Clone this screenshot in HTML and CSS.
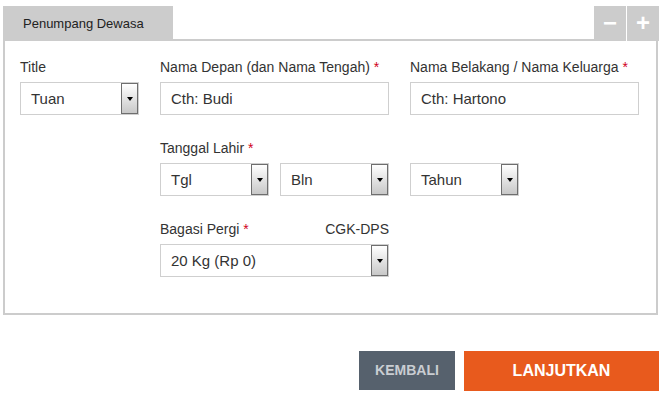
FILE: index.html
```html
<!DOCTYPE html>
<html>
<head>
<meta charset="utf-8">
<link rel="stylesheet" href="styles.css">
</head>
<body>
<div class="wrap">
  <div class="head">
    <div class="tab">Penumpang Dewasa</div>
    <div class="spacer"></div>
    <div class="tools">
      <div class="tool">&minus;</div>
      <div class="tool">+</div>
    </div>
  </div>
  <div class="panel">
    <div class="grid">
      <div class="field">
        <div class="label">Title</div>
        <div class="select w-title"><span class="val">Tuan</span><span class="btn"><span class="tri"></span></span></div>
      </div>
      <div class="field">
        <div class="label">Nama Depan (dan Nama Tengah) <span class="req">*</span></div>
        <div class="input">Cth: Budi</div>
      </div>
      <div class="field">
        <div class="label">Nama Belakang / Nama Keluarga <span class="req">*</span></div>
        <div class="input">Cth: Hartono</div>
      </div>

      <div class="field col2 span2">
        <div class="label">Tanggal Lahir <span class="req">*</span></div>
        <div class="dates">
          <div class="select w-date"><span class="val">Tgl</span><span class="btn"><span class="tri"></span></span></div>
          <div class="select w-date"><span class="val">Bln</span><span class="btn"><span class="tri"></span></span></div>
          <div class="select w-date"><span class="val">Tahun</span><span class="btn"><span class="tri"></span></span></div>
        </div>
      </div>

      <div class="field col2">
        <div class="label split"><span>Bagasi Pergi <span class="req">*</span></span><span>CGK-DPS</span></div>
        <div class="select"><span class="val">20 Kg (Rp 0)</span><span class="btn"><span class="tri"></span></span></div>
      </div>
    </div>
  </div>
  <div class="actions">
    <div class="back">KEMBALI</div>
    <div class="next">LANJUTKAN</div>
  </div>
</div>
</body>
</html>
```
FILE: styles.css
```css
html, body {
  margin: 0;
  padding: 0;
  background: #fff;
}
body {
  font-family: "Liberation Sans", Arial, sans-serif;
  color: #333;
}
.wrap {
  margin: 6px 7px 0 3px;
}
.head {
  display: flex;
  height: 35px;
}
.tab {
  width: 170px;
  background: #cccccc;
  font-size: 13px;
  line-height: 35px;
  padding-left: 20px;
  box-sizing: border-box;
  color: #222;
}
.spacer {
  flex: 1;
  border-bottom: 2px solid #cccccc;
}
.tools {
  display: flex;
  gap: 1px;
  background: #fff;
}
.tool {
  width: 32px;
  background: #cccccc;
  color: #fff;
  font-weight: bold;
  font-size: 24px;
  line-height: 33px;
  text-align: center;
}
.panel {
  margin-right: 1px;
  border: 2px solid #cccccc;
  border-top: none;
  padding: 18px 15px 36px 15px;
}
.grid {
  display: grid;
  grid-template-columns: 119px 229px 229px;
  column-gap: 21px;
  row-gap: 25px;
}
.col2 { grid-column: 2; }
.span2 { grid-column: 2 / span 2; }
.label {
  font-size: 14px;
  line-height: 16px;
  margin-bottom: 7px;
  color: #333;
}
.label.split {
  display: flex;
  justify-content: space-between;
}
.req { color: #d0021b; }
.input, .select {
  height: 33px;
  box-sizing: border-box;
  border: 1px solid #cfcfcf;
  font-size: 15px;
  line-height: 31px;
  padding-left: 10px;
  color: #333;
  background: #fff;
}
.select {
  display: flex;
  justify-content: space-between;
  padding-right: 0;
}
.btn {
  width: 17px;
  height: 31px;
  box-sizing: border-box;
  border: 1px solid #6e6e6e;
  background: linear-gradient(#ffffff, #c8c8c8);
  display: flex;
  align-items: center;
  justify-content: center;
}
.tri {
  width: 0;
  height: 0;
  border-left: 3.5px solid transparent;
  border-right: 3.5px solid transparent;
  border-top: 4px solid #000;
}
.dates {
  display: flex;
}
.w-date { width: 109px; }
.dates .w-date:nth-child(1) { margin-right: 11px; }
.dates .w-date:nth-child(2) { margin-right: 21px; }
.actions {
  display: flex;
  justify-content: flex-end;
  gap: 9px;
  margin-top: 36px;
}
.back {
  width: 96px;
  height: 39px;
  background: #56616d;
  color: #c9cdd2;
  font-weight: bold;
  font-size: 14px;
  line-height: 39px;
  text-align: center;
}
.next {
  width: 195px;
  height: 40px;
  background: #e85a1d;
  color: #fff;
  font-weight: bold;
  font-size: 16px;
  line-height: 40px;
  text-align: center;
}
```
